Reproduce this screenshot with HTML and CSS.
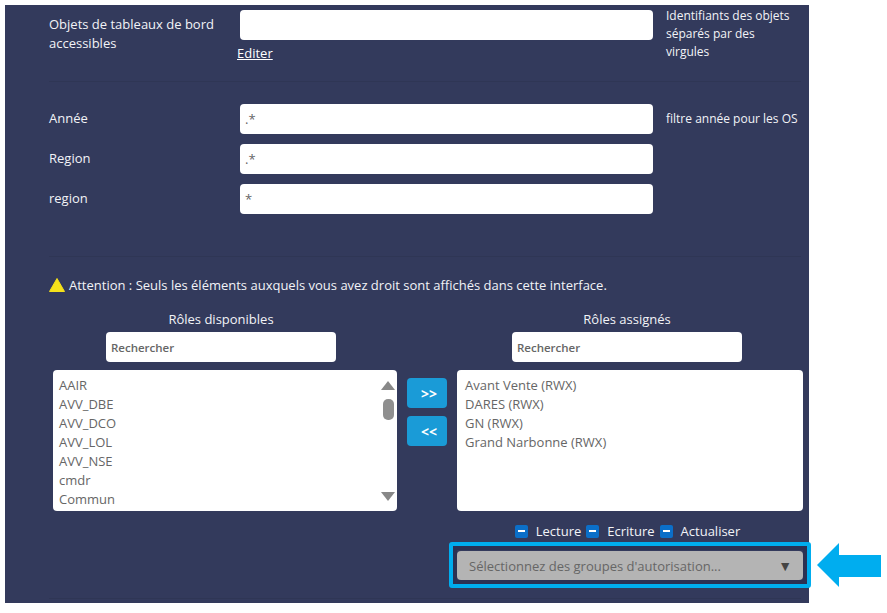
FILE: index.html
```html
<!DOCTYPE html>
<html lang="fr">
<head>
  <meta charset="UTF-8" />
  <title>Groupes d'autorisation</title>
  <link rel="stylesheet" href="styles.css">
</head>
<body>
  <div class="panel">
    <div class="section section-objects">
      <div class="field-row">
        <div class="field-label">Objets de tableaux de bord accessibles</div>
        <div class="field-main">
          <input class="text-input" type="text" />
          <a class="edit-link" href="#">Editer</a>
        </div>
        <div class="field-help">Identifiants des objets séparés par des virgules</div>
      </div>
    </div>

    <div class="section section-filters">
      <div class="field-row">
        <div class="field-label">Année</div>
        <div class="field-main"><input class="text-input" type="text" value=".*" /></div>
        <div class="field-help field-help-single">filtre année pour les OS</div>
      </div>
      <div class="field-row">
        <div class="field-label">Region</div>
        <div class="field-main"><input class="text-input" type="text" value=".*" /></div>
      </div>
      <div class="field-row">
        <div class="field-label">region</div>
        <div class="field-main"><input class="text-input" type="text" value="*" /></div>
      </div>
    </div>

    <div class="section section-roles">
      <p class="warning">
        <svg class="warning-icon" width="16" height="14" viewBox="0 0 16 14"><path d="M8 0.5 L15.5 13.5 L0.5 13.5 Z" fill="#f5e11b" stroke="#f5e11b" stroke-linejoin="round" /></svg>
        Attention : Seuls les éléments auxquels vous avez droit sont affichés dans cette interface.
      </p>

      <div class="roles">
        <div class="role-col">
          <div class="role-title">Rôles disponibles</div>
          <input class="search-input" type="text" placeholder="Rechercher" />
          <div class="role-list">
            <ul>
              <li>AAIR</li>
              <li>AVV_DBE</li>
              <li>AVV_DCO</li>
              <li>AVV_LOL</li>
              <li>AVV_NSE</li>
              <li>cmdr</li>
              <li>Commun</li>
            </ul>
            <div class="scrollbar">
              <span class="scroll-up"></span>
              <span class="scroll-thumb"></span>
              <span class="scroll-down"></span>
            </div>
          </div>
        </div>

        <div class="move-buttons">
          <button type="button">&gt;&gt;</button>
          <button type="button">&lt;&lt;</button>
        </div>

        <div class="role-col role-col-right">
          <div class="role-title">Rôles assignés</div>
          <input class="search-input" type="text" placeholder="Rechercher" />
          <div class="role-list">
            <ul>
              <li>Avant Vente (RWX)</li>
              <li>DARES (RWX)</li>
              <li>GN (RWX)</li>
              <li>Grand Narbonne (RWX)</li>
            </ul>
          </div>
          <div class="rights">
            <span class="right-check"></span><span class="right-name">Lecture</span>
            <span class="right-check"></span><span class="right-name">Ecriture</span>
            <span class="right-check"></span><span class="right-name">Actualiser</span>
          </div>
          <div class="group-select">
            <span>Sélectionnez des groupes d'autorisation...</span>
            <span class="group-caret">▼</span>
          </div>
        </div>
      </div>
    </div>

    <div class="highlight-frame"></div>
    <svg class="highlight-arrow" width="64" height="44" viewBox="0 0 64 44"><path d="M0 22 L22 0 L22 12 L64 12 L64 34 L22 34 L22 44 Z" fill="#00adef" /></svg>
  </div>
</body>
</html>
```

FILE: styles.css
```css
* {
  box-sizing: border-box;
}

body {
  margin: 0;
  background-color: #fff;
  font-family: 'Open Sans', 'Noto Sans', sans-serif;
  font-size: 13px;
}

.panel {
  position: relative;
  width: 804px;
  height: 598px;
  margin: 5px 0 0 5px;
  background-color: #333a5c;
  color: #f2f3f7;
}

.section {
  margin-left: 44px;
  margin-right: 8px;
  border-bottom: 1px solid #2f3655;
}

.section-objects {
  height: 77px;
  padding-top: 5px;
}

.section-filters {
  height: 175px;
  padding-top: 22px;
}

.section-roles {
  height: 342px;
  padding-top: 18px;
}

.field-row {
  display: grid;
  grid-template-columns: 191px 413px 1fr;
  margin-bottom: 10px;
}

.field-label {
  padding-top: 5px;
  padding-right: 20px;
  line-height: 19px;
}

.text-input {
  display: block;
  width: 100%;
  height: 30px;
  padding: 0 5px;
  border: 0;
  border-radius: 4px;
  background: #fff;
  color: #666;
  font-family: inherit;
  font-size: 13px;
}

.edit-link {
  display: inline-block;
  margin: 4px 0 0 -3px;
  color: #fff;
  line-height: 18px;
}

.field-help {
  margin-top: -3px;
  padding-left: 13px;
  font-size: 12px;
  line-height: 18px;
}

.field-help-single {
  margin-top: 0;
  padding-top: 6px;
}

.warning {
  display: flex;
  align-items: center;
  gap: 4px;
  margin: 0 0 14px;
  line-height: 20px;
}

.warning-icon {
  flex: none;
}

.roles {
  display: flex;
  margin-left: 4px;
}

.role-col {
  flex: none;
  display: flex;
  flex-direction: column;
  align-items: center;
  width: 344px;
}

.role-col-right {
  width: 346px;
}

.role-title {
  height: 20px;
  margin-right: 8px;
  margin-bottom: 3px;
  line-height: 20px;
}

.search-input {
  width: 230px;
  height: 30px;
  margin-right: 8px;
  margin-bottom: 8px;
  padding: 0 5px;
  border: 0;
  border-radius: 4px;
  background: #fff;
  font-family: inherit;
  font-size: 11.5px;
  font-weight: 600;
}

.search-input::placeholder {
  color: #666;
  opacity: 1;
}

.role-col-right .role-title,
.role-col-right .search-input {
  margin-right: 6px;
}

.role-list {
  display: flex;
  width: 100%;
  height: 141px;
  padding: 6px 2px 5px 6px;
  overflow: hidden;
  border-radius: 4px;
  background: #fff;
  color: #666;
}

.role-col-right .role-list {
  padding-left: 8px;
}

.role-list ul {
  flex: 1;
  margin: 0;
  padding: 0;
  list-style: none;
  line-height: 19px;
}

.scrollbar {
  display: flex;
  flex-direction: column;
  align-items: center;
  width: 14px;
  margin-top: 5px;
}

.scroll-up {
  border: 7px solid transparent;
  border-top: 0;
  border-bottom: 9px solid #888;
}

.scroll-thumb {
  width: 11px;
  height: 21px;
  margin-top: 9px;
  border-radius: 5px;
  background: #8f8f8f;
}

.scroll-down {
  margin-top: 72px;
  border: 7px solid transparent;
  border-bottom: 0;
  border-top: 9px solid #888;
}

.move-buttons {
  flex: none;
  display: flex;
  flex-direction: column;
  gap: 8px;
  width: 60px;
  padding: 69px 0 0 10px;
}

.move-buttons button {
  width: 40px;
  height: 30px;
  padding: 0 0 0 4px;
  border: 0;
  border-radius: 4px;
  background: #1a9bd7;
  color: #fff;
  font-family: inherit;
  font-size: 14px;
  font-weight: 700;
}

.rights {
  display: flex;
  align-items: center;
  height: 20px;
  margin-top: 10px;
  margin-right: 5px;
}

.right-check {
  position: relative;
  width: 13px;
  height: 13px;
  margin-right: 8px;
  border-radius: 2px;
  background: #0b6fc9;
}

.right-check::after {
  content: "";
  position: absolute;
  left: 3px;
  top: 5px;
  width: 7px;
  height: 2px;
  background: #fff;
}

.right-name {
  margin-right: 5px;
}

.right-name:last-child {
  margin-right: 0;
}

.group-select {
  display: flex;
  justify-content: space-between;
  align-items: center;
  width: 100%;
  height: 29px;
  margin-top: 10px;
  padding: 0 11px 0 12px;
  border-radius: 4px;
  background: #b4b4b4;
  color: #666;
}

.group-caret {
  color: #444;
  font-size: 14px;
}

/* annotation posee sur la capture */
.highlight-frame {
  position: absolute;
  left: 444px;
  top: 537px;
  width: 362px;
  height: 46px;
  border: 4px solid #00adef;
  border-radius: 3px;
  box-shadow: inset 0 0 0 4px #2b3153;
}

.highlight-arrow {
  position: absolute;
  left: 812px;
  top: 538px;
}
```
